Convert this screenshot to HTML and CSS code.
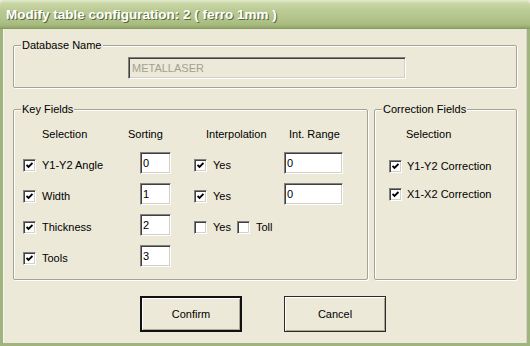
FILE: index.html
```html
<!DOCTYPE html>
<html lang="en">
<head>
  <meta charset="UTF-8">
  <title>Modify table configuration</title>
  <link rel="stylesheet" href="styles.css">
</head>
<body>

  <div class="window">
    <!-- Caption -->
    <div class="titlebar">Modify table configuration: 2 ( ferro 1mm )</div>

    <div class="client">
      <!-- Database -->
      <fieldset class="group group-db">
        <legend>Database Name</legend>
        <input class="field field-db" type="text" value="METALLASER" disabled>
      </fieldset>

      <div class="groups">
        <!-- Key fields -->
        <fieldset class="group group-key">
          <legend>Key Fields</legend>
          <div class="key-grid">
            <div class="head head-sel">Selection</div>
            <div class="head head-sort">Sorting</div>
            <div class="head head-interp">Interpolation</div>
            <div class="head head-range">Int. Range</div>

            <label class="opt"><span class="box"><svg viewBox="0 0 7 7"><polyline points="0.5,3 2.5,5 6.5,1"/></svg></span>Y1-Y2 Angle</label>
            <input class="field field-sort" type="text" value="0">
            <label class="opt"><span class="box"><svg viewBox="0 0 7 7"><polyline points="0.5,3 2.5,5 6.5,1"/></svg></span>Yes</label>
            <input class="field field-range" type="text" value="0">

            <label class="opt"><span class="box"><svg viewBox="0 0 7 7"><polyline points="0.5,3 2.5,5 6.5,1"/></svg></span>Width</label>
            <input class="field field-sort" type="text" value="1">
            <label class="opt"><span class="box"><svg viewBox="0 0 7 7"><polyline points="0.5,3 2.5,5 6.5,1"/></svg></span>Yes</label>
            <input class="field field-range" type="text" value="0">

            <label class="opt"><span class="box"><svg viewBox="0 0 7 7"><polyline points="0.5,3 2.5,5 6.5,1"/></svg></span>Thickness</label>
            <input class="field field-sort" type="text" value="2">
            <div class="opt-pair">
              <label class="opt"><span class="box"></span>Yes</label>
              <label class="opt"><span class="box"></span>Toll</label>
            </div>
            <div></div>

            <label class="opt"><span class="box"><svg viewBox="0 0 7 7"><polyline points="0.5,3 2.5,5 6.5,1"/></svg></span>Tools</label>
            <input class="field field-sort" type="text" value="3">
            <div></div>
            <div></div>
          </div>
        </fieldset>

        <!-- Correction fields -->
        <fieldset class="group group-corr">
          <legend>Correction Fields</legend>
          <div class="corr-list">
            <div class="head head-corr">Selection</div>
            <label class="opt opt-corr"><span class="box"><svg viewBox="0 0 7 7"><polyline points="0.5,3 2.5,5 6.5,1"/></svg></span>Y1-Y2 Correction</label>
            <label class="opt opt-corr"><span class="box"><svg viewBox="0 0 7 7"><polyline points="0.5,3 2.5,5 6.5,1"/></svg></span>X1-X2 Correction</label>
          </div>
        </fieldset>
      </div>

      <!-- Buttons -->
      <div class="buttons">
        <button class="btn btn-default">Confirm</button>
        <button class="btn">Cancel</button>
      </div>
    </div>
  </div>

</body>
</html>
```

FILE: styles.css
```css
/* Global Styles */
body {
  margin: 0;
  padding: 0;
  background-color: #ece9d8;
  font-family: 'Liberation Sans', Arial, sans-serif;
  font-size: 11px;
  color: #000;
}
.window {
  width: 530px;
  height: 346px;
  display: flex;
  flex-direction: column;
  overflow: hidden;
}

/* Caption bar */
.titlebar {
  height: 29px;
  box-sizing: border-box;
  padding: 7px 0 0 6px;
  background: linear-gradient(to bottom, #e4ebd0 0, #cbd8a8 3px, #bccb95 10px, #b2c48b 18px, #a7ba7e 25px, #8fa468 28px, #7f955a 29px);
  border-radius: 5px 5px 0 0;
  color: #fff;
  font-weight: bold;
  font-size: 13.5px;
  line-height: 15px;
  text-shadow: 1px 1px 0 #5a6838;
}

/* Client area */
.client {
  flex: 1;
  padding: 10px 10px 0;
  border: 3px solid #9fb57d;
  border-top: 0;
  box-shadow: inset 1px 0 0 #f7f5ec, inset -1px 0 0 #d8d5c4;
  background-color: #ece9d8;
}

/* Group boxes */
.group {
  margin: 0;
  padding: 0;
  min-width: 0;
  border: 1px solid #a5a493;
  border-radius: 2px;
  box-shadow: 1px 1px 0 #fff, inset 1px 1px 0 #fff;
}
.group legend {
  margin-left: 7px;
  padding: 0 1px;
  line-height: 13px;
  background-color: #ece9d8;
}
.group-db {
  padding-bottom: 8px;
}
.groups {
  display: flex;
  gap: 6px;
  height: 177px;
  margin-top: 15px;
}
.group-key {
  width: 353px;
}
.group-corr {
  flex: 1;
}

/* Text fields */
.field {
  box-sizing: border-box;
  height: 22px;
  margin: 0;
  padding: 0 2px;
  font-family: 'Liberation Sans', Arial, sans-serif;
  font-size: 11px;
  color: #000;
  background-color: #fff;
  border: 1px solid;
  border-color: #808080 #fff #fff #808080;
  box-shadow: inset 1px 1px 0 #404040, inset -1px -1px 0 #d4d0c8;
  outline: none;
}
.field-db {
  display: block;
  width: 278px;
  margin: 5px 0 0 114px;
  background-color: #ece9d8;
  color: #a2a192;
  padding-left: 3px;
}
.field-sort {
  width: 31px;
  margin-left: 12px;
}
.field-range {
  width: 59px;
}

/* Key grid */
.key-grid {
  display: grid;
  grid-template-columns: 105px 66px 90px 59px;
  grid-template-rows: 15px repeat(4, 22px);
  row-gap: 9px;
  padding: 12px 0 0 9px;
}
.head {
  line-height: 13px;
  align-self: start;
}
.head-sel {
  padding-left: 19px;
}
.head-interp {
  padding-left: 12px;
}
.head-range {
  padding-left: 5px;
}

/* Checkboxes */
.opt {
  display: flex;
  align-items: center;
  gap: 6px;
  height: 13px;
  line-height: 13px;
  margin-top: 7px;
  white-space: nowrap;
}
.opt-pair {
  display: flex;
  gap: 6px;
}
.box {
  box-sizing: border-box;
  width: 13px;
  height: 13px;
  flex: none;
  display: flex;
  align-items: center;
  justify-content: center;
  background-color: #fff;
  border: 1px solid;
  border-color: #808080 #fff #fff #808080;
  box-shadow: inset 1px 1px 0 #404040, inset -1px -1px 0 #d4d0c8;
}
.box svg {
  width: 7px;
  height: 7px;
}
.box polyline {
  fill: none;
  stroke: #000;
  stroke-width: 1.9;
}

/* Correction list */
.corr-list {
  display: flex;
  flex-direction: column;
  padding: 12px 0 0 14px;
}
.head-corr {
  padding-left: 17px;
}
.opt-corr {
  gap: 5px;
  margin-top: 15px;
}
.opt-corr:first-of-type {
  margin-top: 19px;
}

/* Buttons */
.buttons {
  display: flex;
  justify-content: center;
  gap: 42px;
  margin: 16px 4px 0 0;
}
.btn {
  width: 102px;
  height: 36px;
  padding: 0;
  font-family: 'Liberation Sans', Arial, sans-serif;
  font-size: 11px;
  color: #000;
  background-color: #ece9d8;
  border: 1px solid #2a2a2a;
  box-shadow: inset 1px 1px 0 #fff, inset -1px -1px 0 #a9a796;
}
.btn-default {
  border: 2px solid #111;
}
```
